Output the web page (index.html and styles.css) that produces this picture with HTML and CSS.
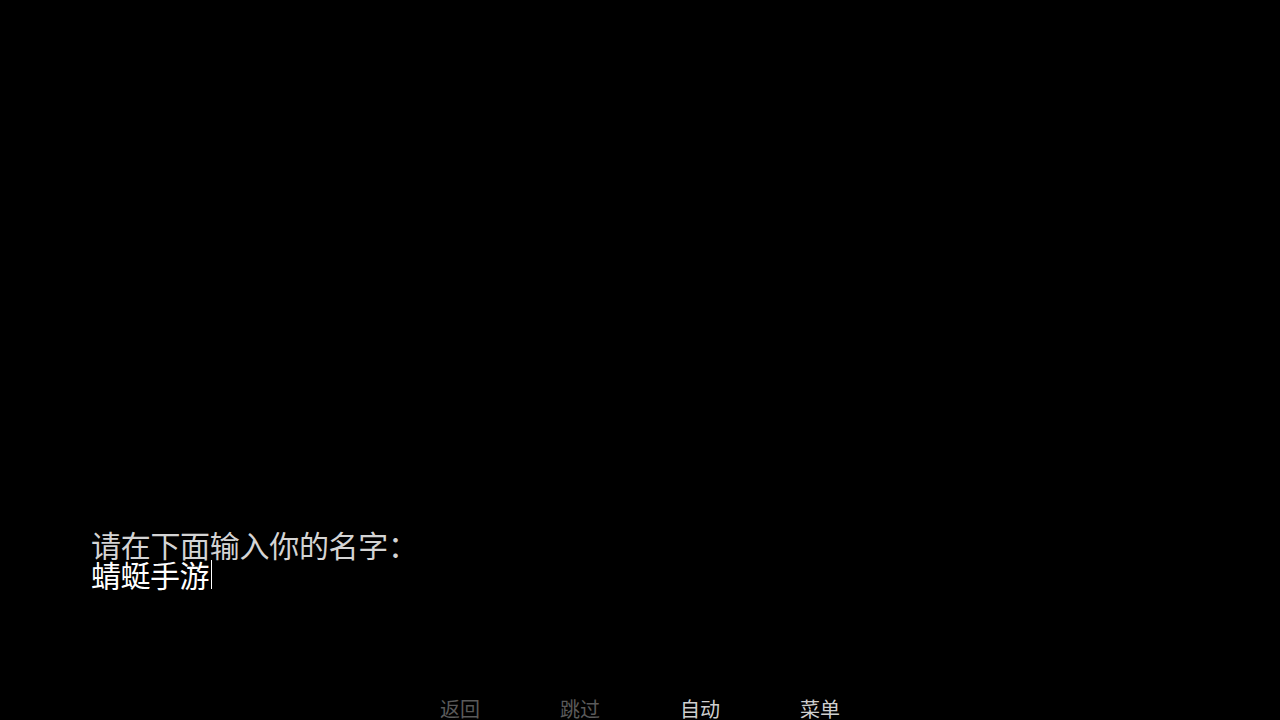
FILE: index.html
```html
<!DOCTYPE html>
<html lang="zh-CN">
<head>
<meta charset="utf-8">
<title>输入名字</title>
<link rel="stylesheet" href="styles.css">
</head>
<body>
<div class="screen">
  <div class="dialogue">
    <div class="prompt">请在下面输入你的名字：</div>
    <div class="input"><span class="name">蜻蜓手游</span><span class="caret"></span></div>
  </div>
  <nav class="quick-menu">
    <span class="qm-item dim">返回</span>
    <span class="qm-item dim">跳过</span>
    <span class="qm-item">自动</span>
    <span class="qm-item">菜单</span>
  </nav>
</div>
</body>
</html>
```
FILE: styles.css
```css
html, body {
  margin: 0;
  padding: 0;
  background: #000;
}
.screen {
  width: 1280px;
  height: 720px;
  overflow: hidden;
  display: flex;
  flex-direction: column;
  font-family: "Noto Sans CJK SC", "Noto Sans", sans-serif;
}
.dialogue {
  padding: 529px 0 0 91px;
  font-size: 30px;
  line-height: 30px;
}
.prompt {
  color: #d4d4d4;
  letter-spacing: -0.3px;
}
.input {
  color: #ffffff;
  display: flex;
  align-items: center;
  letter-spacing: -0.5px;
}
.caret {
  display: inline-block;
  width: 1px;
  height: 29px;
  background: #fff;
  margin-left: 2px;
}
.quick-menu {
  display: flex;
  justify-content: center;
  padding: 108px 0 0 0;
  font-size: 20px;
  line-height: 24px;
}
.qm-item {
  width: 120px;
  text-align: center;
  color: #cfcfcf;
}
.qm-item.dim {
  color: #5a5a5a;
}
```
